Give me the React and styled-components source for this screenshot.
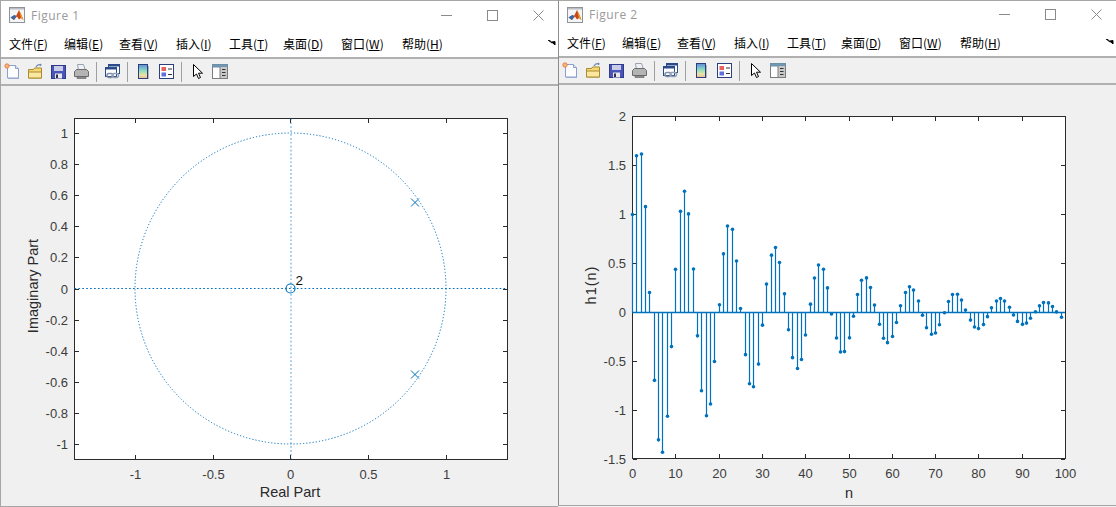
import React from "react";
import styled, { createGlobalStyle } from "styled-components";

const GlobalStyle = createGlobalStyle`
  html, body {
    margin: 0;
    padding: 0;
    background: #f0f0f0;
    overflow: hidden;
  }
`;

const Desktop = styled.div`
  display: flex;
  align-items: flex-start;
  width: 1116px;
  height: 507px;
  font-family: "Noto Sans CJK SC", "Liberation Sans", sans-serif;
`;

const Win = styled.div`
  display: flex;
  flex-direction: column;
  box-sizing: border-box;
  width: 558px;
  height: ${(p) => (p.$second ? 506 : 507)}px;
  background: #f0f0f0;
  border-top: 1px solid #a6a6a6;
  border-left: 1px solid ${(p) => (p.$second ? "#8c8c8c" : "#a6a6a6")};
  border-bottom: 1px solid #a6a6a6;
`;

const TitleBar = styled.div`
  display: flex;
  align-items: center;
  box-sizing: border-box;
  height: ${(p) => p.$height}px;
  padding-bottom: 2px;
  background: #fff;
  flex: none;
`;

const Logo = styled.svg`
  width: 16px;
  height: 16px;
  margin-left: 8px;
  flex: none;
`;

const TitleText = styled.span`
  margin-left: 6px;
  font: 12px "Open Sans", "Liberation Sans", sans-serif;
  letter-spacing: 0.5px;
  color: #9a9a9a;
  flex: 1;
`;

const Controls = styled.div`
  display: flex;
  align-items: center;
  padding-right: 14px;
  gap: 35px;
  svg {
    display: block;
  }
`;

const MenuBar = styled.div`
  position: relative;
  display: flex;
  align-items: center;
  height: 28px;
  box-sizing: border-box;
  padding-bottom: 2px;
  background: #fff;
  border-bottom: 2px solid #b0b0b0;
  flex: none;
  font-size: 12px;
  color: #000;
`;

const MenuItem = styled.span`
  width: ${(p) => p.$width}px;
  flex: none;
  white-space: nowrap;
  &:first-child {
    margin-left: 8px;
  }
  u {
    text-underline-offset: 1px;
  }
`;

const MenuArrow = styled.svg`
  position: absolute;
  right: 2px;
  top: 9px;
  width: 8px;
  height: 7px;
`;

const ToolBar = styled.div`
  display: flex;
  align-items: center;
  height: 27px;
  box-sizing: border-box;
  padding-left: 3px;
  background: #f0f0f0;
  border-bottom: 2px solid #b0b0b0;
  flex: none;
`;

const ToolIcon = styled.svg`
  width: 17px;
  height: 17px;
  margin-right: 6px;
  flex: none;
`;

const ToolSep = styled.div`
  width: 1px;
  height: 20px;
  background: #a0a0a0;
  margin-right: 7px;
  flex: none;
`;

const Canvas = styled.div`
  flex: 1;
  min-height: 0;
  svg {
    display: block;
  }
`;

const TickText = styled.text`
  font: 13px "Liberation Sans", Arial, sans-serif;
  fill: #3c3c3c;
`;

const Multiplicity = styled.text`
  font: 13.5px "Liberation Sans", Arial, sans-serif;
  fill: #111;
`;

const AxisLabel = styled.text`
  font: 14.5px "Liberation Sans", Arial, sans-serif;
  fill: #2a2a2a;
  text-anchor: middle;
`;

const BLUE = "#0072BD";
const INK = "#2b2b2b";

const menus = [
  ["文件", "F", 55],
  ["编辑", "E", 55],
  ["查看", "V", 57],
  ["插入", "I", 53],
  ["工具", "T", 54],
  ["桌面", "D", 58],
  ["窗口", "W", 61],
  ["帮助", "H", 60],
];

const MatlabLogo = () => (
  <Logo viewBox="0 0 16 16">
    <rect x="0.5" y="0.5" width="15" height="15" fill="#f5f5f5" stroke="#8f949b" />
    <rect x="1" y="1" width="14" height="1.5" fill="#b9bec6" />
    <path d="M1.500 10.500L5.500 8 7 9l3-6 2 4 2.500 6-2.500-2-2 1.500L8 9.500 5 13z" fill="#c9481b" />
    <path d="M1.500 10.500L5.500 8 7 9 5 13z" fill="#2a6cb4" />
    <path d="M10 3l2 4 2.500 6-2.500-2z" fill="#f0a11f" />
  </Logo>
);

const NewIcon = () => (
  <ToolIcon viewBox="0 0 17 17">
    <path d="M4 3h8l3 3v10H4z" fill="#a9b6da" />
    <path d="M3.500 2.500h8l3 3v9.500h-11z" fill="#fdfdff" stroke="#8ba0cc" />
    <path d="M11.500 2.500v3h3" fill="#dfe7f6" stroke="#8ba0cc" />
    <circle cx="3" cy="3" r="2.200" fill="#f4b87a" stroke="#e8703a" strokeWidth="0.800" />
  </ToolIcon>
);

const OpenIcon = () => (
  <ToolIcon viewBox="0 0 17 17">
    <path d="M1.500 6.500h5l1-1.500h7v10h-13z" fill="#f6d777" stroke="#a98a2e" />
    <path d="M1.500 9h13v6h-13z" fill="#fbe7a0" stroke="#a98a2e" />
    <path d="M9 4c1-2 3-3 5-2" fill="none" stroke="#6d86ad" strokeWidth="1.200" />
    <path d="M13 .5l2 1.500-2.200 1.200z" fill="#6d86ad" />
  </ToolIcon>
);

const SaveIcon = () => (
  <ToolIcon viewBox="0 0 17 17">
    <rect x="1.500" y="2.500" width="14" height="13" fill="#4a55b8" stroke="#2f3a8c" />
    <rect x="4" y="3" width="9" height="5" fill="#c9cdea" />
    <rect x="5" y="10.500" width="7" height="5" fill="#e8e8ee" />
    <rect x="6" y="11.500" width="2" height="3.500" fill="#30304a" />
  </ToolIcon>
);

const PrintIcon = () => (
  <ToolIcon viewBox="0 0 17 17">
    <path d="M4.500 1.500h6l2 6h-7z" fill="#eef1f6" stroke="#9aa2ad" />
    <path d="M1.500 8.500l2-2h10l2 2v5h-14z" fill="#b4b4b4" stroke="#6c6c6c" />
    <path d="M4 13.500h9v2H4z" fill="#8a8a8a" stroke="#5e5e5e" strokeWidth="0.600" />
  </ToolIcon>
);

const LinkIcon = () => (
  <ToolIcon viewBox="0 0 17 17">
    <rect x="4.500" y="1.500" width="11" height="9" fill="#fff" stroke="#2b4a8a" />
    <rect x="4.500" y="1.500" width="11" height="2" fill="#2b4a8a" />
    <rect x="1.500" y="4.500" width="11" height="9" fill="#fff" stroke="#2b4a8a" />
    <rect x="1.500" y="4.500" width="11" height="2" fill="#2b4a8a" />
    <rect x="3" y="10.500" width="6" height="4" rx="2" fill="none" stroke="#7e8fa6" strokeWidth="1.500" />
    <rect x="8" y="10.500" width="6.500" height="4" rx="2" fill="none" stroke="#94a5ba" strokeWidth="1.500" />
  </ToolIcon>
);

const ColorbarIcon = ({ id }) => (
  <ToolIcon viewBox="0 0 17 17">
    <defs>
      <linearGradient id={id} x1="0" y1="0" x2="0" y2="1">
        <stop offset="0" stopColor="#5a8fd8" />
        <stop offset="0.45" stopColor="#8fdcc0" />
        <stop offset="0.75" stopColor="#e8e6a0" />
        <stop offset="1" stopColor="#f2b4a0" />
      </linearGradient>
    </defs>
    <rect x="3.500" y="1.500" width="9" height="14" fill={`url(#${id})`} stroke="#2b3f7c" />
    <rect x="13" y="3" width="1" height="13" fill="#b0b4bc" />
  </ToolIcon>
);

const LegendIcon = () => (
  <ToolIcon viewBox="0 0 17 17">
    <rect x="1.500" y="1.500" width="14" height="14" fill="#fff" stroke="#2b3f7c" />
    <rect x="3.500" y="4" width="4.500" height="4" fill="#e8615f" />
    <rect x="3.500" y="9.500" width="4.500" height="4" fill="#5f6fe0" />
    <path d="M10 6h4M10 11.500h4" stroke="#333" strokeWidth="1" />
  </ToolIcon>
);

const PointerIcon = () => (
  <ToolIcon viewBox="0 0 17 17">
    <path d="M4.500 1.500v12l3-2.500 2 4.500 2-1-2-4.300h4z" fill="#fff" stroke="#000" strokeWidth="1" />
  </ToolIcon>
);

const PlotToolsIcon = () => (
  <ToolIcon viewBox="0 0 17 17">
    <rect x="0.500" y="1.500" width="15" height="14" fill="#fff" stroke="#7c7c7c" />
    <rect x="0.500" y="1.500" width="15" height="2.500" fill="#6e9ab8" stroke="#6e8ea6" />
    <rect x="8" y="4" width="7" height="11" fill="#c8c8c8" />
    <path d="M8 4v11" stroke="#7c7c7c" />
    <path d="M10 6.500h3.500M10 9.500h3.500M10 12.500h3.500" stroke="#333" />
  </ToolIcon>
);

const ToolRow = ({ id }) => (
  <ToolBar>
    <NewIcon />
    <OpenIcon />
    <SaveIcon />
    <PrintIcon />
    <ToolSep />
    <LinkIcon />
    <ToolSep />
    <ColorbarIcon id={id} />
    <LegendIcon />
    <ToolSep />
    <PointerIcon />
    <PlotToolsIcon />
  </ToolBar>
);

const Figure = ({ title, titleH, second, children }) => (
  <Win $second={second}>
    <TitleBar $height={titleH}>
      <MatlabLogo />
      <TitleText>{title}</TitleText>
      <Controls>
        <svg width="11" height="11" viewBox="0 0 11 11">
          <path d="M0 5.500h11" stroke="#8a8a8a" />
        </svg>
        <svg width="11" height="11" viewBox="0 0 11 11">
          <rect x="0.500" y="0.500" width="10" height="10" fill="none" stroke="#8a8a8a" />
        </svg>
        <svg width="11" height="11" viewBox="0 0 11 11">
          <path d="M0.500 0.500l10 10M10.500 0.500l-10 10" stroke="#8a8a8a" />
        </svg>
      </Controls>
    </TitleBar>
    <MenuBar>
      {menus.map(([name, key, width]) => (
        <MenuItem key={key} $width={width}>
          {name}(<u>{key}</u>)
        </MenuItem>
      ))}
      <MenuArrow viewBox="0 0 8 7">
        <path d="M0 0l4 3M1 0l5 4M4 2l3 3V1.500z" stroke="#000" fill="#000" strokeWidth="1" />
      </MenuArrow>
    </MenuBar>
    <ToolRow id={`cb-${title.replace(" ", "")}`} />
    <Canvas>{children}</Canvas>
  </Win>
);

// ticks on all four sides, like a matlab "box on" axes
const Axes = ({ x0, x1, y0, y1, xTicks, yTicks, xLabelY }) => (
  <g>
    <rect x={x0 + 0.5} y={y0 + 0.5} width={x1 - x0} height={y1 - y0} fill="#fff" stroke={INK} />
    {xTicks.map(([px, label]) => (
      <g key={px}>
        <path d={`M${px + 0.5} ${y1}v-4M${px + 0.5} ${y0 + 1}v4`} stroke={INK} />
        <TickText x={px + 0.5} y={xLabelY} textAnchor="middle">{label}</TickText>
      </g>
    ))}
    {yTicks.map(([py, label]) => (
      <g key={py}>
        <path d={`M${x0 + 1} ${py + 0.5}h4M${x1} ${py + 0.5}h-4`} stroke={INK} />
        <TickText x={x0 - 6} y={py + 5} textAnchor="end">{label}</TickText>
      </g>
    ))}
  </g>
);

const PoleZero = () => {
  const cx = 290.5;
  const cy = 288.5;
  const r = 155.5;
  const xTicks = [
    [135, "-1"], [213, "-0.5"], [290, "0"], [368, "0.5"], [446, "1"],
  ];
  const yTicks = [1, 0.8, 0.6, 0.4, 0.2, 0, -0.2, -0.4, -0.6, -0.8, -1].map((v) => [
    Math.round(cy - v * r),
    String(v),
  ]);
  return (
    <svg width="557" height="420" viewBox="1 86 557 420">
      <Axes x0={74} x1={507} y0={118} y1={459} xTicks={xTicks} yTicks={yTicks} xLabelY={479} />
      <circle cx={cx} cy={cy} r={r} fill="none" stroke={BLUE} strokeDasharray="1.200 2" />
      <path d="M74.500 288.500H507" stroke={BLUE} strokeDasharray="1.700 2.200" />
      <path d="M291 118.500V459" stroke={BLUE} strokeDasharray="1.700 2.200" strokeOpacity="0.35" strokeWidth="2" />
      <circle cx={cx} cy={cy} r="4.500" fill="none" stroke={BLUE} strokeWidth="1.200" />
      {[202.500, 374.500].map((y) => (
        <path key={y} d={`M411 ${y - 4}l8 8M419 ${y - 4}l-8 8`} stroke={BLUE} fill="none" />
      ))}
      <Multiplicity x="295.500" y="285">2</Multiplicity>
      <AxisLabel x="290" y="497">Real Part</AxisLabel>
      <AxisLabel transform="translate(38 286) rotate(-90)">Imaginary Part</AxisLabel>
    </svg>
  );
};

// impulse response of the two poles: h[n] = 1.6 h[n-1] - 0.9425 h[n-2], 100 samples
const response = () => {
  const h = [1, 1.6];
  for (let n = 2; n < 100; n++) h[n] = 1.6 * h[n - 1] - 0.9425 * h[n - 2];
  return h;
};

const Stem = () => {
  const px = (n) => Math.round(632 + n * 4.33) + 0.5;
  const py = (v) => 312.5 - v * 98;
  const xTicks = [0, 10, 20, 30, 40, 50, 60, 70, 80, 90, 100].map((n) => [
    Math.round(632 + n * 4.33),
    String(n),
  ]);
  const yTicks = [2, 1.5, 1, 0.5, 0, -0.5, -1, -1.5].map((v) => [
    Math.round(312 - v * 98),
    String(v),
  ]);
  const h = response();
  return (
    <svg width="557" height="420" viewBox="559 85 557 420">
      <Axes x0={632} x1={1065} y0={116} y1={458} xTicks={xTicks} yTicks={yTicks} xLabelY={478} />
      {h.map((v, n) => (
        <g key={n}>
          <path d={`M${px(n)} ${py(0)}V${py(v)}`} stroke={BLUE} strokeWidth="1.200" />
          <circle cx={px(n)} cy={py(v)} r="1.800" fill={BLUE} />
        </g>
      ))}
      <path d="M632.500 312.500H1065" stroke={BLUE} strokeWidth="1.500" />
      <AxisLabel x="849" y="498">n</AxisLabel>
      <AxisLabel transform="translate(596 285) rotate(-90)" letterSpacing="1">h1(n)</AxisLabel>
    </svg>
  );
};

export default function App() {
  return (
    <>
      <GlobalStyle />
      <Desktop>
        <Figure title="Figure 1" titleH={30}>
          <PoleZero />
        </Figure>
        <Figure title="Figure 2" titleH={29} second>
          <Stem />
        </Figure>
      </Desktop>
    </>
  );
}
